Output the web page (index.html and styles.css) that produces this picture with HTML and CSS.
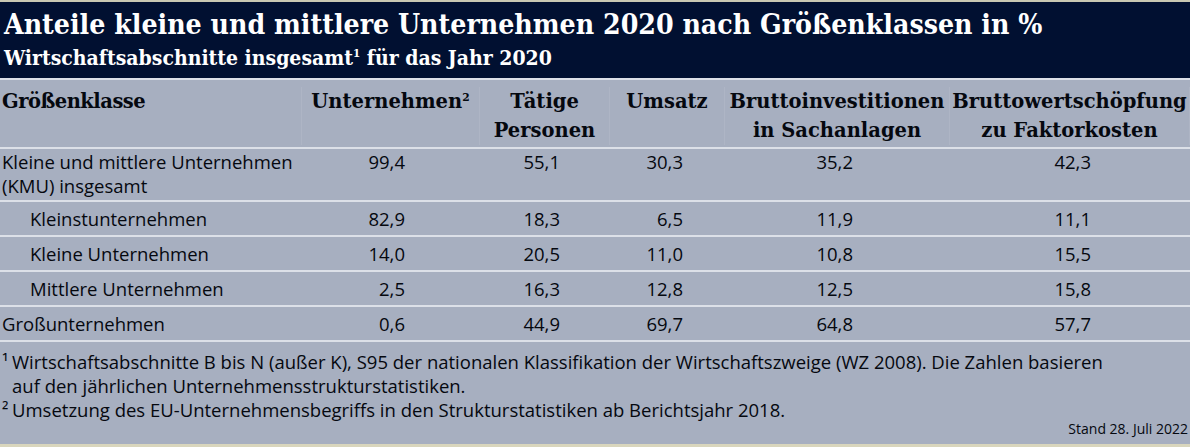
FILE: index.html
```html
<!DOCTYPE html>
<html lang="de">
<head>
<meta charset="utf-8">
<link rel="stylesheet" href="styles.css">
</head>
<body>
<div class="card">
  <header class="head">
    <h1 class="title">Anteile kleine und mittlere Unternehmen 2020 nach Größenklassen in %</h1>
    <p class="subtitle">Wirtschaftsabschnitte insgesamt<sup>1</sup> für das Jahr 2020</p>
  </header>
  <div class="table">
    <div class="row row-head">
      <div class="th th-left">Größenklasse</div>
      <div class="th">Unternehmen<sup>2</sup></div>
      <div class="th">Tätige<br>Personen</div>
      <div class="th">Umsatz</div>
      <div class="th">Bruttoinvestitionen<br>in Sachanlagen</div>
      <div class="th">Bruttowertschöpfung<br>zu Faktorkosten</div>
    </div>
    <div class="row row-multi">
      <div class="td label">Kleine und mittlere Unternehmen<br>(KMU) insgesamt</div>
      <div class="td num c2">99,4</div>
      <div class="td num c3">55,1</div>
      <div class="td num c4">30,3</div>
      <div class="td num c5">35,2</div>
      <div class="td num c6">42,3</div>
    </div>
    <div class="row">
      <div class="td label indent">Kleinstunternehmen</div>
      <div class="td num c2">82,9</div>
      <div class="td num c3">18,3</div>
      <div class="td num c4">6,5</div>
      <div class="td num c5">11,9</div>
      <div class="td num c6">11,1</div>
    </div>
    <div class="row">
      <div class="td label indent">Kleine Unternehmen</div>
      <div class="td num c2">14,0</div>
      <div class="td num c3">20,5</div>
      <div class="td num c4">11,0</div>
      <div class="td num c5">10,8</div>
      <div class="td num c6">15,5</div>
    </div>
    <div class="row">
      <div class="td label indent">Mittlere Unternehmen</div>
      <div class="td num c2">2,5</div>
      <div class="td num c3">16,3</div>
      <div class="td num c4">12,8</div>
      <div class="td num c5">12,5</div>
      <div class="td num c6">15,8</div>
    </div>
    <div class="row">
      <div class="td label">Großunternehmen</div>
      <div class="td num c2">0,6</div>
      <div class="td num c3">44,9</div>
      <div class="td num c4">69,7</div>
      <div class="td num c5">64,8</div>
      <div class="td num c6">57,7</div>
    </div>
  </div>
  <footer class="notes">
    <p class="note"><span class="mark">¹</span>Wirtschaftsabschnitte B bis N (außer K), S95 der nationalen Klassifikation der Wirtschaftszweige (WZ 2008). Die Zahlen basieren<br>auf den jährlichen Unternehmensstrukturstatistiken.</p>
    <p class="note"><span class="mark">²</span>Umsetzung des EU-Unternehmensbegriffs in den Strukturstatistiken ab Berichtsjahr 2018.</p>
    <p class="stand">Stand 28. Juli 2022</p>
  </footer>
</div>
</body>
</html>
```

FILE: styles.css
```css
html, body {
  margin: 0;
  padding: 0;
  background: #a7afc0;
}

.card {
  width: 1190px;
  height: 447px;
  box-sizing: border-box;
  border-top: 2px solid #c9c8b2;
  border-bottom: 3px solid #d9d6bd;
  background: #a7afc0;
  color: #05080f;
  font-family: "Open Sans", "Noto Sans", sans-serif;
  display: flex;
  flex-direction: column;
}

.head {
  background: #011031;
  color: #ffffff;
  height: 76px;
  box-sizing: border-box;
  padding: 4px 4px 0;
  font-family: "DejaVu Serif", serif;
  font-stretch: condensed;
}

.title {
  margin: 0;
  font-size: 28.2px;
  line-height: 38px;
  font-weight: bold;
}

.subtitle {
  margin: 1px 0 0;
  font-size: 21px;
  line-height: 26px;
  font-weight: bold;
}

.subtitle sup, .th sup {
  font-size: 0.55em;
  line-height: 0;
  vertical-align: 0.7em;
}

.table {
  display: flex;
  flex-direction: column;
}

.row {
  display: grid;
  grid-template-columns: 302px 178px 130px 115px 225px 240px;
  border-top: 2px solid #dce0e8;
}

.row-head {
  font-family: "DejaVu Serif", serif;
  font-weight: bold;
  font-size: 19.5px;
  line-height: 29px;
  padding: 7px 0 2px;
}

.th {
  text-align: center;
  border-right: 1px solid #aeb5c5;
}

.th-left {
  text-align: left;
  padding-left: 2px;
  letter-spacing: -0.5px;
}

.td {
  font-size: 18.5px;
  line-height: 23px;
  padding-top: 5px;
  padding-bottom: 5px;
}

.row-multi .td {
  line-height: 24px;
  padding-top: 1px;
  padding-bottom: 2px;
}

.label {
  padding-left: 2px;
}

.indent {
  padding-left: 30px;
}

.num {
  text-align: right;
}

.c2 { padding-right: 75px; }
.c3 { padding-right: 50px; }
.c4 { padding-right: 42px; }
.c5 { padding-right: 97px; }
.c6 { padding-right: 99px; }

.notes {
  border-top: 2px solid #dce0e8;
  padding: 8px 2px 0;
  font-size: 18.5px;
  line-height: 24px;
}

.note {
  margin: 0;
  padding-left: 10px;
  text-indent: -10px;
}

.mark {
  display: inline-block;
  width: 10px;
  text-indent: 0;
}

.stand {
  margin: -2px 0 0;
  text-align: right;
  font-size: 14px;
  line-height: 18px;
}
```
